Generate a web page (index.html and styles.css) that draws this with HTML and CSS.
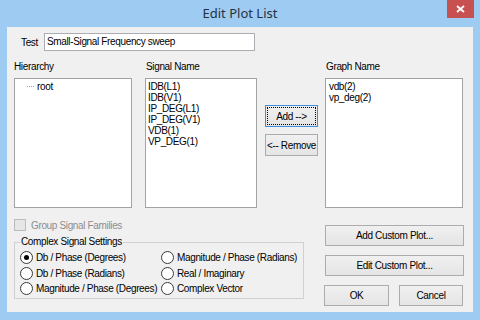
FILE: index.html
```html
<!DOCTYPE html>
<html lang="en">
<head>
  <meta charset="UTF-8">
  <title>Edit Plot List</title>
  <link rel="stylesheet" href="styles.css">
</head>
<body>

  <div class="window">
    <div class="titlebar">
      <span></span>
      <div class="title">Edit Plot List</div>
      <div class="close">
        <svg width="9" height="8" viewBox="0 0 9 8">
          <path d="M1 1 L8 7 M8 1 L1 7" stroke="#fff" stroke-width="1.8" fill="none"/>
        </svg>
      </div>
    </div>

    <div class="client">
      <div class="test-row">
        <label>Test</label>
        <div class="textbox">Small-Signal Frequency sweep</div>
      </div>

      <div class="lists">
        <div class="col col-hier">
          <div class="col-label">Hierarchy</div>
          <div class="listbox">
            <div class="tree-item"><span class="dots"></span>root</div>
          </div>
        </div>
        <div class="col col-signal">
          <div class="col-label">Signal Name</div>
          <div class="listbox">
            <div>IDB(L1)</div>
            <div>IDB(V1)</div>
            <div>IP_DEG(L1)</div>
            <div>IP_DEG(V1)</div>
            <div>VDB(1)</div>
            <div>VP_DEG(1)</div>
          </div>
        </div>
        <div class="col col-buttons">
          <button class="btn btn-focus">Add --&gt;</button>
          <button class="btn">&lt;-- Remove</button>
        </div>
        <div class="col col-graph">
          <div class="col-label">Graph Name</div>
          <div class="listbox">
            <div>vdb(2)</div>
            <div>vp_deg(2)</div>
          </div>
        </div>
      </div>

      <div class="bottom">
        <div class="bottom-left">
          <div class="check-row">
            <span class="checkbox"></span>
            Group Signal Families
          </div>
          <fieldset class="group">
            <legend>Complex Signal Settings</legend>
            <div class="radio-grid">
              <div class="radio-item"><span class="radio checked"></span>Db / Phase (Degrees)</div>
              <div class="radio-item"><span class="radio"></span>Magnitude / Phase (Radians)</div>
              <div class="radio-item"><span class="radio"></span>Db / Phase (Radians)</div>
              <div class="radio-item"><span class="radio"></span>Real / Imaginary</div>
              <div class="radio-item"><span class="radio"></span>Magnitude / Phase (Degrees)</div>
              <div class="radio-item"><span class="radio"></span>Complex Vector</div>
            </div>
          </fieldset>
        </div>

        <div class="bottom-right">
          <button class="btn btn-wide">Add Custom Plot...</button>
          <button class="btn btn-wide">Edit Custom Plot...</button>
          <div class="ok-row">
            <button class="btn btn-ok">OK</button>
            <button class="btn btn-cancel">Cancel</button>
          </div>
        </div>
      </div>
    </div>
  </div>

</body>
</html>
```

FILE: styles.css
```css
* {
  box-sizing: border-box;
}

body {
  margin: 0;
  font-family: "Liberation Sans", Arial, sans-serif;
  font-size: 10px;
  letter-spacing: -0.35px;
  color: #000;
}

.window {
  width: 480px;
  height: 320px;
  background: #9ecbf1;
  display: flex;
  flex-direction: column;
}

.titlebar {
  height: 27px;
  display: grid;
  grid-template-columns: 1fr auto 1fr;
  align-items: start;
}

.title {
  font-family: "Noto Sans", sans-serif;
  font-size: 13px;
  letter-spacing: 0;
  line-height: 27px;
  color: #263240;
}

.close {
  justify-self: end;
  margin-right: 6px;
  width: 27px;
  height: 18px;
  background: #c75050;
  display: flex;
  align-items: center;
  justify-content: center;
}

.client {
  margin: 0 7px;
  height: 285px;
  background: #f0f0f0;
}

/* test name */
.test-row {
  display: flex;
  align-items: center;
  gap: 6px;
  padding: 6px 0 0 14px;
}

.textbox {
  width: 211px;
  height: 18px;
  padding-left: 2px;
  line-height: 16px;
  background: #fff;
  border: 1px solid #abadb3;
}

/* list boxes */
.lists {
  display: flex;
  margin-top: 10px;
  padding-left: 7px;
}

.col-label {
  line-height: 12px;
  margin-bottom: 5px;
}

.listbox {
  height: 130px;
  padding: 2px;
  line-height: 11px;
  background: #fff;
  border: 1px solid #a3a3a3;
}

.col-hier {
  width: 118px;
}

.col-signal {
  width: 112px;
  margin-left: 13px;
}

.col-signal .col-label,
.col-graph .col-label {
  padding-left: 1px;
}

.col-buttons {
  width: 53px;
  margin-left: 8px;
  padding-top: 44px;
  display: flex;
  flex-direction: column;
  gap: 7px;
}

.col-graph {
  width: 138px;
  margin-left: 7px;
}

.col-graph .listbox {
  padding-left: 3px;
}

.tree-item {
  display: flex;
  align-items: center;
  padding-left: 10px;
}

.dots {
  width: 7px;
  margin-right: 3px;
  border-top: 1px dotted #a0a0a0;
}

/* buttons */
.btn {
  height: 22px;
  padding: 0;
  font: inherit;
  letter-spacing: inherit;
  color: #000;
  background: linear-gradient(#f0f0f0, #e5e5e5);
  border: 1px solid #acacac;
  display: flex;
  align-items: center;
  justify-content: center;
}

.btn-focus {
  border-color: #3c8fd8;
  outline: 1px dotted #000;
  outline-offset: -3px;
}

/* lower part */
.bottom {
  display: flex;
  padding-left: 7px;
}

.bottom-left {
  width: 290px;
  padding-top: 11px;
}

.check-row {
  display: flex;
  align-items: center;
  gap: 5px;
  height: 12px;
  color: #8d8d8d;
}

.checkbox {
  width: 12px;
  height: 12px;
  background: #e6e6e6;
  border: 1px solid #bcbcbc;
}

.group {
  margin: 5px 0 0;
  padding: 0 0 1px;
  min-width: 0;
  border: 1px solid #d0d0d0;
}

.group legend {
  margin-left: 5px;
  padding: 0 1px;
  line-height: 12px;
}

.radio-grid {
  display: grid;
  grid-template-columns: 141px 1fr;
  grid-auto-rows: 15.5px;
  padding: 2px 0 0 5px;
}

.radio-item {
  display: flex;
  align-items: center;
  gap: 3px;
  white-space: nowrap;
}

.radio {
  width: 13px;
  height: 13px;
  border-radius: 50%;
  background: #fff;
  border: 1px solid #3a3a3a;
  display: flex;
  align-items: center;
  justify-content: center;
}

.radio.checked::after {
  content: "";
  width: 5px;
  height: 5px;
  border-radius: 50%;
  background: #000;
}

.bottom-right {
  margin-left: 20px;
  width: 140px;
  padding-top: 17px;
  display: flex;
  flex-direction: column;
  gap: 9px;
}

.btn-wide {
  width: 139px;
  height: 21px;
  margin-left: 1px;
}

.ok-row {
  display: flex;
  gap: 10px;
}

.btn-ok {
  width: 65px;
  height: 21px;
}

.btn-cancel {
  width: 64px;
  height: 21px;
}
```
